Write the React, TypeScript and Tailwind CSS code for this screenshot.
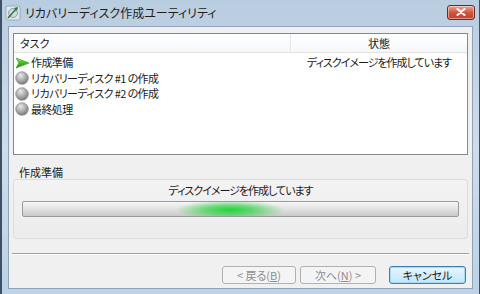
import React from "react";

const font = { fontFamily: '"Noto Sans CJK JP", "Noto Sans", sans-serif' };

function GreenArrow() {
  return (
    <svg width="15" height="12" viewBox="0 0 15 12">
      <defs>
        <linearGradient id="ga" x1="0" y1="0" x2="0" y2="1">
          <stop offset="0" stopColor="#9be86a" />
          <stop offset="0.5" stopColor="#3cbf1c" />
          <stop offset="1" stopColor="#1f8a10" />
        </linearGradient>
      </defs>
      <path d="M1 1 L14 6 L1 11 L4 6 Z" fill="url(#ga)" stroke="#2a8a18" strokeWidth="0.6" />
    </svg>
  );
}

function GrayBall() {
  return (
    <svg width="14" height="14" viewBox="0 0 14 14">
      <defs>
        <radialGradient id="gb" cx="0.4" cy="0.3" r="0.8">
          <stop offset="0" stopColor="#e8e8e8" />
          <stop offset="0.6" stopColor="#a0a0a0" />
          <stop offset="1" stopColor="#6a6a6a" />
        </radialGradient>
      </defs>
      <circle cx="7" cy="7" r="6.3" fill="url(#gb)" stroke="#7a7a7a" strokeWidth="0.6" />
    </svg>
  );
}

function TitleIcon() {
  return (
    <svg width="16" height="16" viewBox="0 0 16 16">
      <rect x="1" y="1" width="14" height="14" rx="2" fill="#dfe8f0" stroke="#8aa0b4" strokeWidth="0.8" />
      <circle cx="8" cy="8" r="4.5" fill="#cfd9e4" stroke="#7d8da0" strokeWidth="0.8" />
      <circle cx="8" cy="8" r="1.2" fill="#fff" />
      <path d="M3 13 L12 3" stroke="#2e7d32" strokeWidth="1.6" />
      <path d="M9 3 L13 2 L12 6 Z" fill="#2e7d32" />
    </svg>
  );
}

function Row({ icon, text, status }: { icon: React.ReactNode; text: string; status?: string }) {
  return (
    <div className="flex h-[15.5px] items-center leading-[15px]">
      <div className="flex w-[277px] items-center">
        <div className="flex w-[16px] shrink-0 items-center justify-center">{icon}</div>
        <span className="ml-[1px] whitespace-nowrap tracking-[-0.6px]">{text}</span>
      </div>
      <div className="flex-1 text-center whitespace-nowrap tracking-[-1px]">{status ?? ""}</div>
    </div>
  );
}

export default function App() {
  return (
    <div
      className="relative flex h-[294px] w-[480px] flex-col overflow-hidden border-l-[2px] border-r border-[#3d5166] bg-gradient-to-b from-[#b9cde0] via-[#cfdcea] to-[#bcd2e6] text-[11px] text-[#1a1a1a] [font-feature-settings:'palt']"
      style={font}
    >
      {/* Title bar */}
      <div className="flex h-[26px] shrink-0 items-center pl-[3px]">
        <TitleIcon />
        <span className="ml-[4px] text-[12px] text-[#1e1e1e]">リカバリーディスク作成ユーティリティ</span>
        <div className="ml-auto mr-[4px] mb-[2px] flex h-[15px] w-[28px] items-center justify-center rounded-[3px] border border-[#6b2a24] bg-gradient-to-b from-[#e8a594] via-[#d2553f] to-[#c2402c] shadow-[inset_0_0_0_1px_rgba(255,255,255,0.45)]">
          <svg width="10" height="8" viewBox="0 0 10 8">
            <path d="M1.5 1 L8.5 7 M8.5 1 L1.5 7" stroke="#fff" strokeWidth="2" strokeLinecap="round" />
          </svg>
        </div>
      </div>

      {/* Client area */}
      <div className="mx-[6px] mb-[5px] flex h-[263px] flex-col border border-[#8ea3b8] bg-[#f0f0f0]">
        {/* List */}
        <div className="mx-[4px] mt-[6px] h-[122px] shrink-0 border border-[#828790] bg-white">
          <div className="flex h-[19px] border-b border-[#e3e3e3] bg-gradient-to-b from-white to-[#f6f7f9]">
            <div className="flex w-[277px] items-center border-r border-[#e3e6ea] pl-[6px]">タスク</div>
            <div className="flex flex-1 items-center justify-center">状態</div>
          </div>
          <div className="pt-[2px]">
            <Row icon={<GreenArrow />} text="作成準備" status="ディスクイメージを作成しています" />
            <Row icon={<GrayBall />} text="リカバリーディスク #1 の作成" />
            <Row icon={<GrayBall />} text="リカバリーディスク #2 の作成" />
            <Row icon={<GrayBall />} text="最終処理" />
          </div>
        </div>

        {/* Group */}
        <div className="mx-[4px] mt-[10px] flex shrink-0 flex-col">
          <div className="h-[14px] pl-[6px] leading-[14px]">作成準備</div>
          <div className="h-[60px] rounded-[3px] border border-[#dcdcdc] bg-gradient-to-b from-[#f3f3f3] to-[#ececec] px-[8px] pt-[2px]">
            <div className="text-center leading-[16px] tracking-[-1px]">ディスクイメージを作成しています</div>
            <div className="relative mt-[3px] h-[16px] overflow-hidden rounded-[2px] border border-[#9a9a9a] bg-gradient-to-b from-[#f6f6f6] via-[#e2e2e2] to-[#c8c8c8]">
              <div className="absolute left-[152px] top-[-2px] h-[20px] w-[110px] bg-[radial-gradient(ellipse_at_center,_#1fd63a_0%,_rgba(60,210,80,0.75)_30%,_rgba(200,220,200,0)_70%)]" />
            </div>
          </div>
        </div>

        {/* Separator */}
        <div className="mx-[3px] mt-[14px] h-[2px] shrink-0 border-t border-b border-t-[#a0a0a0] border-b-white" />

        {/* Buttons */}
        <div className="mt-[11px] flex shrink-0 justify-end gap-[4px] pr-[6px]">
          <div className="flex h-[18px] w-[74px] items-center justify-center rounded-[3px] border border-[#adb2b5] bg-[#f4f4f4] text-[#8d8d8d]">
            &lt; 戻る(<span className="underline">B</span>)
          </div>
          <div className="flex h-[18px] w-[76px] items-center justify-center rounded-[3px] border border-[#adb2b5] bg-[#f4f4f4] text-[#8d8d8d]">
            次へ(<span className="underline">N</span>) &gt;
          </div>
          <div className="ml-[9px] flex h-[18px] w-[77px] items-center justify-center rounded-[3px] border border-[#3c7fb1] bg-gradient-to-b from-[#eaf6fd] to-[#bee6fd] shadow-[inset_0_0_0_1px_#a7d9f5]">
            キャンセル
          </div>
        </div>
      </div>
    </div>
  );
}
